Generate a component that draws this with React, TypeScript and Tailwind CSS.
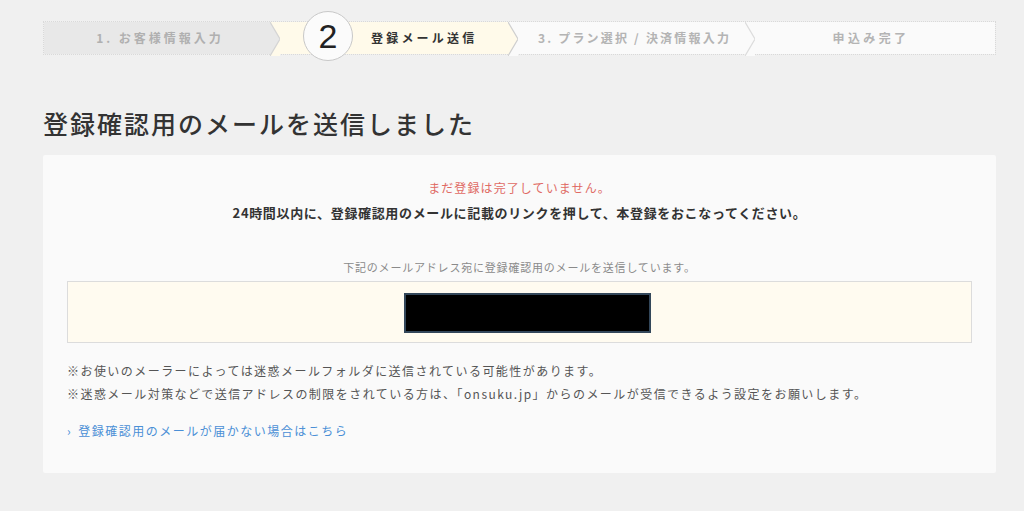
import React from "react";

const jp = { fontFamily: '"Noto Sans CJK JP", "Noto Sans", sans-serif' };

function Chevron({ from, to, stroke }: { from: string; to: string; stroke: string }) {
  return (
    <svg width="10" height="34" viewBox="0 0 10 34" className="block shrink-0" style={{ background: to }}>
      <polygon points="0,0 10,17 0,34" fill={from} />
      <polyline points="0,0 10,17 0,34" fill="none" stroke={stroke} strokeWidth="1.2" />
    </svg>
  );
}

export default function App() {
  return (
    <div className="min-h-[511px] bg-[#f0f0f0] pt-[21px]" style={jp}>
      <div className="ml-[43px] w-[953px]">
        {/* Step bar */}
        <div className="flex h-[34px] border border-dotted border-[#d9d9d9]">
          <div className="flex w-[226px] items-center justify-center bg-[#e8e8e8] pl-[6px] text-[12px] font-bold tracking-[3px] text-[#b0b0b0]">
            1. お客様情報入力
          </div>
          <Chevron from="#e8e8e8" to="#fffaea" stroke="#d4d4d4" />
          <div className="flex w-[228px] items-center bg-[#fffaea] pl-[23px]">
            <div className="-mt-[5px] flex h-[50px] w-[50px] shrink-0 items-center justify-center rounded-full border-[1.5px] border-[#c8c8c8] bg-[#fbfbfb] text-[34px] font-medium leading-none text-[#222]" style={{ fontFamily: '"Liberation Sans", Arial, sans-serif' }}>
              2
            </div>
            <div className="ml-[18px] text-[12px] font-bold tracking-[3.2px] text-[#333]">登録メール送信</div>
          </div>
          <Chevron from="#fffaea" to="#fafafa" stroke="#cfcfcf" />
          <div className="flex w-[227px] items-center justify-center bg-[#fafafa] pl-[6px] text-[12px] font-bold tracking-[2.2px] text-[#b4b4b4]">
            3. プラン選択 / 決済情報入力
          </div>
          <Chevron from="#fafafa" to="#fafafa" stroke="#dcdcdc" />
          <div className="flex flex-1 items-center justify-center bg-[#fafafa] pr-[8px] text-[12px] font-bold tracking-[3.4px] text-[#b4b4b4]">
            申込み完了
          </div>
        </div>

        {/* Heading */}
        <h1 className="mt-[52px] text-[25px] font-medium leading-[32px] tracking-[2px] text-[#333]">
          登録確認用のメールを送信しました
        </h1>

        {/* Panel */}
        <div className="mt-[16px] rounded-[2px] bg-[#fafafa] px-[24px] pb-[33px] pt-[24px]">
          <p className="text-center text-[12px] leading-[18px] tracking-[1.1px] text-[#e06a64]">
            まだ登録は完了していません。
          </p>
          <p className="mt-[6px] text-center text-[13px] font-bold leading-[20px] tracking-[0.65px] text-[#333]">
            24時間以内に、登録確認用のメールに記載のリンクを押して、本登録をおこなってください。
          </p>
          <p className="mt-[36px] text-center text-[11px] leading-[16px] tracking-[0.8px] text-[#8a8a8a]">
            下記のメールアドレス宛に登録確認用のメールを送信しています。
          </p>
          <div className="mt-[6px] flex h-[62px] justify-center border border-[#dcdcdc] bg-[#fffbf0] pt-[11px]">
            <div className="ml-[15px] h-[40px] w-[247px] border-2 border-[#33475a] bg-black" />
          </div>
          <p className="mt-[19px] text-[12px] leading-[18px] tracking-[1.45px] text-[#555]">
            ※お使いのメーラーによっては迷惑メールフォルダに送信されている可能性があります。
          </p>
          <p className="mt-[5px] text-[12px] leading-[18px] tracking-[1.45px] text-[#555]">
            ※迷惑メール対策などで送信アドレスの制限をされている方は、「onsuku.jp」からのメールが受信できるよう設定をお願いします。
          </p>
          <p className="mt-[19px] text-[12px] leading-[18px] tracking-[1.5px] text-[#4a8fd6]">
            <span className="mr-[6px]">›</span>登録確認用のメールが届かない場合はこちら
          </p>
        </div>
      </div>
    </div>
  );
}
